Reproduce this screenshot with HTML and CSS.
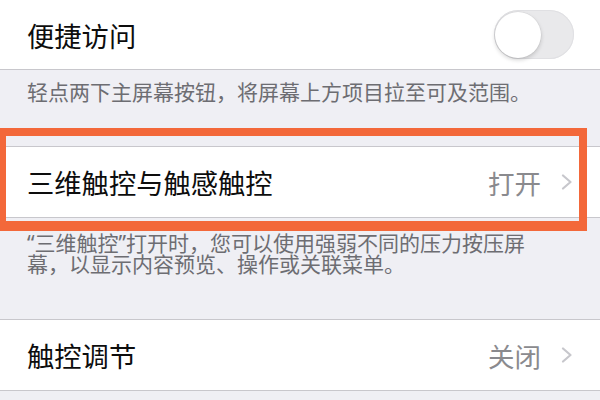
FILE: index.html
```html
<!DOCTYPE html>
<html lang="zh-CN">
<head>
  <meta charset="UTF-8">
  <title>辅助功能 - 触控</title>
  <meta name="viewport" content="width=device-width, initial-scale=1.0">
  <link rel="stylesheet" href="styles.css">
</head>
<body>
  <div class="group first">
    <div class="cell">
      <span class="cell-title">便捷访问</span>
      <span class="switch"><span class="knob"></span></span>
    </div>
  </div>
  <p class="footer short">轻点两下主屏幕按钮，将屏幕上方项目拉至可及范围。</p>

  <div class="group marked">
    <div class="cell">
      <span class="cell-title">三维触控与触感触控</span>
      <span class="cell-value">打开</span>
      <svg class="chevron" viewBox="0 0 12 16" width="12" height="16">
        <polyline points="2,1.5 9.5,8 2,14.5" fill="none" stroke="#c7c7cc" stroke-width="2.2" stroke-linecap="round" stroke-linejoin="round"/>
      </svg>
    </div>
  </div>
  <p class="footer long">“三维触控”打开时，您可以使用强弱不同的压力按压屏幕，以显示内容预览、操作或关联菜单。</p>

  <div class="group">
    <div class="cell">
      <span class="cell-title">触控调节</span>
      <span class="cell-value">关闭</span>
      <svg class="chevron" viewBox="0 0 12 16" width="12" height="16">
        <polyline points="2,1.5 9.5,8 2,14.5" fill="none" stroke="#c7c7cc" stroke-width="2.2" stroke-linecap="round" stroke-linejoin="round"/>
      </svg>
    </div>
  </div>
</body>
</html>
```

FILE: styles.css
```css
body {
  margin: 0;
  padding: 0;
  background: #efeff4;
  font-family: "Noto Sans CJK SC", "Noto Sans", sans-serif;
  overflow: hidden;
}

.group {
  background: white;
  border-top: 1px solid #c8c7cc;
  border-bottom: 1px solid #c8c7cc;
}

.group.first {
  border-top: none;
}

.cell {
  height: 70px;
  display: flex;
  align-items: center;
  padding: 0 27px;
}

.group.first .cell {
  height: 69px;
}

.cell-title {
  flex: 1;
  font-size: 27.3px;
  color: #0d0d0d;
}

.cell-value {
  font-size: 26.5px;
  color: #8a8a8e;
  margin-right: 20px;
}

.chevron {
  display: block;
}

/* off-state switch */
.switch {
  width: 80px;
  height: 49px;
  border-radius: 25px;
  background: #e9e9eb;
  box-shadow: inset 0 0 0 1px #e0e0e3;
  margin-right: -1px;
  display: flex;
  align-items: center;
  padding-left: 1px;
  box-sizing: border-box;
}

.knob {
  width: 46px;
  height: 46px;
  border-radius: 50%;
  background: white;
  box-shadow: 0 2px 4px rgba(0,0,0,0.18), 0 0 0 0.5px rgba(0,0,0,0.06);
}

/* latin font first so the curly quotes stay narrow */
.footer {
  margin: 0;
  font-family: "Noto Sans", "Noto Sans CJK SC", sans-serif;
  font-size: 21px;
  color: #6d6d72;
}

.footer.short {
  line-height: 24px;
  padding: 10px 27px 42px;
}

.footer.long {
  line-height: 21px;
  padding: 15px 40px 44px 27px;
}

/* orange highlight frame drawn over the second group */
.marked {
  position: relative;
}

.marked::after {
  content: "";
  position: absolute;
  top: -19px;
  left: -2px;
  right: 13px;
  bottom: -14px;
  border: 8px solid #f3683a;
  border-bottom-width: 10px;
  pointer-events: none;
}
```
